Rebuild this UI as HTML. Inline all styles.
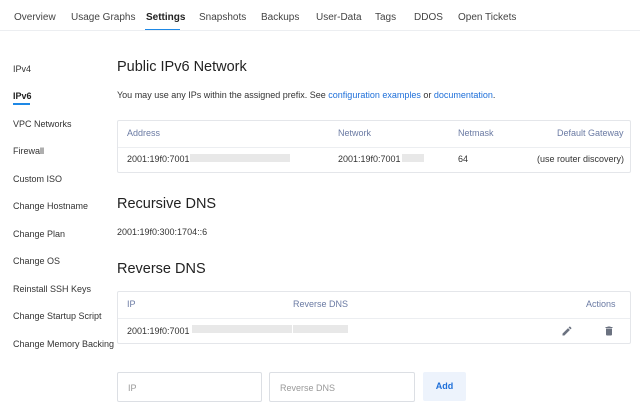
<!DOCTYPE html>
<html><head><style>
*{margin:0;padding:0;box-sizing:border-box}
body{width:640px;height:405px;background:#fff;font-family:"Liberation Sans",sans-serif;color:#333;position:relative;overflow:hidden;font-size:10px}
.a{position:absolute;white-space:nowrap}
.tab{top:12px;font-size:10px;color:#444}
.side{left:13px;font-size:9px;color:#333}
h2{position:absolute;left:117px;font-size:14.5px;font-weight:normal;color:#222}
.box{position:absolute;left:117px;width:514px;border:1px solid #e4e6ea;border-radius:2px}
.th{color:#6a7aa3;font-size:9px}
.blur{position:absolute;background:#e8e8e8;height:8px}
.inp{position:absolute;top:372px;height:30px;border:1px solid #dcdfe4;border-radius:2px;color:#999;font-size:9px;padding:10px}
</style></head><body>
<div class="a tab" style="left:14px">Overview</div>
<div class="a tab" style="left:71px">Usage Graphs</div>
<div class="a tab" style="left:146px;color:#222;font-weight:bold">Settings</div>
<div class="a tab" style="left:199px">Snapshots</div>
<div class="a tab" style="left:261px">Backups</div>
<div class="a tab" style="left:316px">User-Data</div>
<div class="a tab" style="left:375px">Tags</div>
<div class="a tab" style="left:414px">DDOS</div>
<div class="a tab" style="left:458px">Open Tickets</div>
<div class="a" style="left:145px;top:29px;width:35px;height:2px;background:#1e88e5"></div>
<div class="a" style="left:0;top:30px;width:640px;height:1px;background:#eceef1"></div>

<div class="a side" style="top:64px">IPv4</div>
<div class="a side" style="top:91px;font-weight:bold;color:#222">IPv6</div>
<div class="a" style="left:13px;top:103px;width:17px;height:2px;background:#1e88e5"></div>
<div class="a side" style="top:119px">VPC Networks</div>
<div class="a side" style="top:146px">Firewall</div>
<div class="a side" style="top:174px">Custom ISO</div>
<div class="a side" style="top:201px">Change Hostname</div>
<div class="a side" style="top:229px">Change Plan</div>
<div class="a side" style="top:256px">Change OS</div>
<div class="a side" style="top:284px">Reinstall SSH Keys</div>
<div class="a side" style="top:311px">Change Startup Script</div>
<div class="a side" style="top:339px">Change Memory Backing</div>

<h2 style="top:59px">Public IPv6 Network</h2>
<div class="a" style="left:117px;top:90px;font-size:9px">You may use any IPs within the assigned prefix. See <span style="color:#1e6fd9">configuration examples</span> or <span style="color:#1e6fd9">documentation</span>.</div>
<div class="box" style="top:120px;height:53px">
<div style="position:absolute;top:26px;left:0;right:0;height:1px;background:#eceef1"></div>
</div>
<div class="a th" style="left:127px;top:128px">Address</div>
<div class="a th" style="left:338px;top:128px">Network</div>
<div class="a th" style="left:458px;top:128px">Netmask</div>
<div class="a th" style="left:557px;top:128px">Default Gateway</div>
<div class="a" style="left:127px;top:154px;font-size:9px">2001:19f0:7001</div>
<div class="blur" style="left:190px;top:154px;width:100px"></div>
<div class="a" style="left:338px;top:154px;font-size:9px">2001:19f0:7001</div>
<div class="blur" style="left:402px;top:154px;width:22px"></div>
<div class="a" style="left:458px;top:154px;font-size:9px">64</div>
<div class="a" style="left:537px;top:154px;font-size:9px">(use router discovery)</div>

<h2 style="top:196px">Recursive DNS</h2>
<div class="a" style="left:117px;top:227px;font-size:9px">2001:19f0:300:1704::6</div>

<h2 style="top:261px">Reverse DNS</h2>
<div class="box" style="top:291px;height:53px">
<div style="position:absolute;top:26px;left:0;right:0;height:1px;background:#eceef1"></div>
</div>
<div class="a th" style="left:127px;top:299px">IP</div>
<div class="a th" style="left:293px;top:299px">Reverse DNS</div>
<div class="a th" style="left:586px;top:299px">Actions</div>
<div class="a" style="left:127px;top:326px;font-size:9px">2001:19f0:7001</div>
<div class="blur" style="left:192px;top:325px;width:100px"></div>
<div class="blur" style="left:293px;top:325px;width:55px"></div>
<svg class="a" style="left:561px;top:325px" width="12" height="12" viewBox="0 0 24 24"><path fill="#6b7280" d="M3 17.25V21h3.75L17.8 9.94l-3.75-3.75L3 17.25zM20.7 7.04a1 1 0 000-1.41l-2.34-2.34a1 1 0 00-1.41 0l-1.83 1.83 3.75 3.75 1.83-1.83z"/></svg>
<svg class="a" style="left:603px;top:325px" width="12" height="12" viewBox="0 0 24 24"><path fill="#6b7280" d="M6 19c0 1.1.9 2 2 2h8c1.1 0 2-.9 2-2V7H6v12zM19 4h-3.5l-1-1h-5l-1 1H5v2h14V4z"/></svg>

<div class="inp" style="left:117px;width:145px">IP</div>
<div class="inp" style="left:269px;width:146px">Reverse DNS</div>
<div class="a" style="left:423px;top:372px;width:43px;height:29px;background:#edf3fc;border-radius:2px;color:#1e6fd9;font-weight:bold;font-size:9px;text-align:center;line-height:29px">Add</div>
</body></html>
